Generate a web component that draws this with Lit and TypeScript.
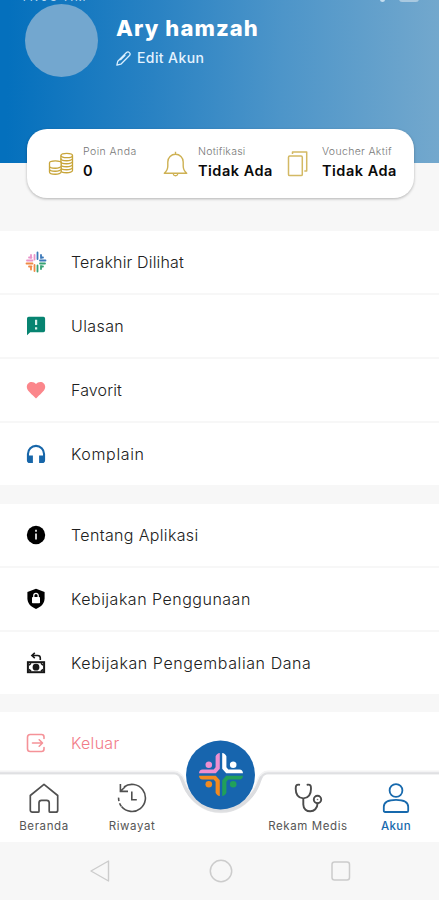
import { LitElement, html, svg, css } from "lit";
import { customElement, property } from "lit/decorators.js";
import { styleMap } from "lit/directives/style-map.js";

const coin = (x: number, y: number, n: number) => svg`
  <ellipse cx=${x} cy=${y} rx="5.8" ry="2.2"/>
  <path d=${`M${x - 5.8} ${y}v${n * 3}c0 3 11.6 3 11.6 0v${-n * 3}`}/>
  ${Array.from({ length: n - 1 }, (_, i) => svg`<path d=${`M${x - 5.8} ${y + (i + 1) * 3}c0 3 11.6 3 11.6 0`}/>`)}`;

const emblem = (colors: string[]) => svg`
  ${[[1, 1], [-1, 1], [1, -1], [-1, -1]].map(([sx, sy], i) => svg`
    <g transform=${`scale(${sx} ${sy})`} fill=${colors[i]}>
      <path d="M-1.200-21.500V-5.800L-5.200-1.200H-22c.1-2.100 1.300-3.700 3.600-3.700h11.100l1.900-2.300v-11c.8-2 2.300-3.100 4.200-3.300z"/>
      <circle cx="-12.200" cy="-9.700" r="3.300"/>
    </g>`)}`;

const icons: Record<string, unknown> = {
  edit: svg`<svg width="15" height="15" viewBox="0 0 14 14" fill="none" stroke="#d9efff" stroke-width="1.2" stroke-linejoin="round"><path d="M.8 13.2l.9-3.700 8.100-8.100c1.800-1.600 4.500.9 2.800 2.800l-8.100 8.100zM8.700 3.700L4 8.500"/></svg>`,
  coins: svg`<svg width="27" height="24" viewBox="0 0 27 24" fill="none" stroke="#c8a53a" stroke-width="1.300">${coin(18.700, 3.500, 5)}<g fill="#fff">${coin(7.300, 11, 3)}</g></svg>`,
  bell: svg`<svg width="25" height="26" viewBox="0 0 25 26" fill="none" stroke="#ceb153" stroke-width="1.400" stroke-linejoin="round"><path d="M1.300 22.300c2.700-2.400 3.500-4 3.500-7.300V11a7.700 7.700 0 0 1 15.400 0v4c0 3.300.8 4.900 3.500 7.300zM12.500 3.300V.8M10.300 23c.4 2.400 4 2.400 4.400 0"/></svg>`,
  voucher: svg`<svg width="22" height="26" viewBox="0 0 22 26" fill="none" stroke="#d3b964" stroke-width="1.500" stroke-linejoin="round"><rect x="1.500" y="5" width="13.800" height="19.600" rx="1.200"/><path d="M5.500 3V1h14.200v19h-2.400"/></svg>`,
  seen: svg`<svg width="22" height="22" viewBox="-22 -22 44 44">
    <g stroke-width="3.600" stroke-linecap="round">
      <path stroke="#e994c9" d="M-3-14v9M-10-14v6M-18-3H-7M-14-9H-9"/><path stroke="#3b78b9" d="M3-19v13M10-14v6M8-3H19M10-9H14"/>
      <path stroke="#ef8a45" d="M-19 3H-7M-14 9H-9M-10 9v6M-3 6v12"/><path stroke="#36a274" d="M3 7v12M10 8v6M8 3H18M10 9H14"/>
    </g></svg>`,
  review: svg`<svg width="20" height="20" viewBox="0 0 20 20"><path fill="#078471" d="M2.700.8h14.700a1.700 1.700 0 0 1 1.700 1.700v12a1.700 1.700 0 0 1-1.700 1.700H4.200L1 19.300V2.500A1.700 1.700 0 0 1 2.700.8z"/><path fill="#d7efe9" d="M9 3.800h2.200V9H9zM9 11.200h2.200v2.200H9z"/></svg>`,
  heart: svg`<svg width="20" height="20" viewBox="0 0 20 20"><path fill="#fb868b" d="M10 18.400L8.700 17.200C4 12.900.8 10.200.8 6.800.8 4 3 1.900 5.700 1.900c1.700 0 3.300.8 4.300 2.100 1-1.300 2.600-2.100 4.300-2.100 2.700 0 4.900 2.100 4.900 4.900 0 3.400-3.200 6.100-7.900 10.400z"/></svg>`,
  headset: svg`<svg width="20" height="20" viewBox="0 0 20 20"><path fill="#1766a9" d="M10 .8a9.100 9.100 0 0 0-9.100 9.100v6.300A2.800 2.800 0 0 0 3.700 19h3.200v-7.600H3V9.900a7 7 0 0 1 14 0v1.500h-3.900V19h3.200a2.800 2.800 0 0 0 2.800-2.800V9.900A9.100 9.100 0 0 0 10 .8z"/></svg>`,
  info: svg`<svg width="20" height="20" viewBox="0 0 20 20"><circle cx="10" cy="10" r="9.200"/><path fill="#ccc" d="M9 4.800h2v2H9zM9 8.500h2v6H9z"/></svg>`,
  shield: svg`<svg width="20" height="22" viewBox="0 0 20 22"><path d="M10 .8l8.600 3.300v6.200c0 4.800-3.300 8.700-8.600 10.700-5.300-2-8.600-5.900-8.600-10.700V4.100z"/><rect x="6" y="9" width="8" height="6.200" rx=".8" fill="#fff"/><path d="M7.800 9V7.500a2.200 2.200 0 0 1 4.400 0V9" fill="none" stroke="#fff" stroke-width="1.300"/></svg>`,
  refund: svg`<svg width="20" height="22" viewBox="0 0 20 22" fill="none" stroke="#171717" stroke-width="1.600"><rect x="1.900" y="10.200" width="16.200" height="10" stroke-width="2"/><circle cx="10" cy="15.200" r="2.600" fill="#171717"/><path d="M3 13.200l2-2M17 13.200l-2-2M3 17.400l2 2M17 17.400l-2 2"/><path d="M8.800.9L5.900 3.500l2.900 2.600M6.300 3.500h5.400c2 0 2.600 1.200 2.600 2.600v2"/></svg>`,
  logout: svg`<svg width="20" height="20" viewBox="0 0 20 20" fill="none" stroke="#f59298" stroke-width="1.600" stroke-linecap="round" stroke-linejoin="round"><path d="M18 5.500V3.900c0-1.600-.8-2.400-2.400-2.400H4.200C2.300 1.500 1.500 2.300 1.500 4.200v11.600c0 1.900.8 2.700 2.700 2.700h11.400c1.600 0 2.400-.8 2.400-2.400v-1.600M6.500 10h9.800M13.200 6.800l3.300 3.200-3.300 3.200"/></svg>`,
  home: svg`<svg width="32" height="32" viewBox="0 0 32 32" fill="none" stroke="#505050" stroke-width="1.700" stroke-linejoin="round"><path d="M2.300 12.500L16 1.400l13.700 11.100v14.700a2 2 0 0 1-2 2h-5.500a1 1 0 0 1-1-1v-8.400a2.500 2.500 0 0 0-2.500-2.500h-5.200a2.500 2.500 0 0 0-2.500 2.500v8.400a1 1 0 0 1-1 1H4.300a2 2 0 0 1-2-2z"/></svg>`,
  history: svg`<svg width="32" height="32" viewBox="0 0 32 32" fill="none" stroke="#505050" stroke-width="1.600"><path d="M8 4A13.500 13.500 0 1 1 5.500 23.500"/><path stroke-dasharray="3.500 2.200" d="M5.300 23.300A13.500 13.500 0 0 1 2.800 13"/><path d="M4.400 1v7.400h7.600M4.700 8l4.300-4M15.800 8.500v8.200h5"/></svg>`,
  steth: svg`<svg width="32" height="32" viewBox="0 0 32 32" fill="none" stroke="#4b4b4b" stroke-width="1.900" stroke-linecap="round"><path d="M7.200 1.700C4 1.300 3.700 3 3.700 5.700c0 5 1.700 9.200 7.600 9.700 6-.5 7.700-4.700 7.700-9.700 0-2.700-.2-4.400-3.500-4M11.300 15.400v6.100c0 9.200 14.200 9.200 14.200-1"/><circle cx="25.500" cy="16.500" r="3.700"/><circle cx="25.500" cy="16.500" r=".8" fill="#777" stroke="none"/></svg>`,
  user: svg`<svg width="32" height="32" viewBox="0 0 32 32" fill="none" stroke="#1769ad" stroke-width="1.800" stroke-linejoin="round"><circle cx="16" cy="7.500" r="6.400"/><path d="M3.800 27.700v-3.900c0-4.600 3.800-7 12.200-7s12.200 2.400 12.200 7v3.900c0 .8-.5 1.300-1.300 1.300H5.100c-.8 0-1.300-.5-1.300-1.300z"/></svg>`,
};

const base = css`
  :host { box-sizing: border-box; font-family: Inter, "Open Sans", sans-serif; }
  svg { display: block; }
`;

const tracked = (px: number) => styleMap({ letterSpacing: `${px}px` });

@customElement("stat-item")
class StatItem extends LitElement {
  @property() icon = "";
  @property() label = "";
  @property() value = "";
  @property({ type: Number }) tracking = 0;
  static styles = [base, css`
    :host { display: grid; grid-template-columns: 35px 1fr; align-items: center; }
    .icon { padding-top: 2px; }
    .label { font-size: 10.500px; line-height: 17px; font-weight: 300; color: #777; white-space: nowrap; }
    .value { font-size: 14.500px; line-height: 22px; font-weight: 600; color: #0a0a0a; letter-spacing: .5px; white-space: nowrap; }
  `];
  render() {
    return html`<div class="icon">${icons[this.icon]}</div>
      <div><div class="label" style=${tracked(this.tracking)}>${this.label}</div><div class="value">${this.value}</div></div>`;
  }
}

@customElement("menu-row")
class MenuRow extends LitElement {
  @property() icon = "";
  @property() label = "";
  @property({ type: Number }) tracking = 0;
  @property({ type: Boolean, reflect: true }) danger = false;
  static styles = [base, css`
    :host { flex: 1; display: grid; grid-template-columns: 46px 1fr; align-items: center; padding-left: 25px; background: #fff; }
    .icon { width: 22px; display: flex; justify-content: center; }
    .label { font-size: 16px; line-height: 22px; font-weight: 300; color: #202020; white-space: nowrap; }
    :host([danger]) .label { color: #f27b88; }
  `];
  render() {
    return html`<div class="icon">${icons[this.icon]}</div><div class="label" style=${tracked(this.tracking)}>${this.label}</div>`;
  }
}

@customElement("nav-item")
class NavItem extends LitElement {
  @property() icon = "";
  @property() label = "";
  @property({ type: Boolean, reflect: true }) active = false;
  static styles = [base, css`
    :host { display: flex; flex-direction: column; align-items: center; gap: 3px; padding-top: 10px; }
    .label { font-size: 11.500px; line-height: 16px; letter-spacing: .6px; color: #555; white-space: nowrap; }
    :host([active]) .label { color: #1769ad; font-weight: 500; letter-spacing: .4px; }
  `];
  render() {
    return html`${icons[this.icon]}<div class="label">${this.label}</div>`;
  }
}

const groups: { cls: string; rows: [string, string, number][] }[] = [
  { cls: "four", rows: [["seen", "Terakhir Dilihat", 0.17], ["review", "Ulasan", 0.4], ["heart", "Favorit", 0.12], ["headset", "Komplain", 0.65]] },
  { cls: "three", rows: [["info", "Tentang Aplikasi", 0.35], ["shield", "Kebijakan Penggunaan", 0.5], ["refund", "Kebijakan Pengembalian Dana", 0.58]] },
  { cls: "one", rows: [["logout", "Keluar", 0.3]] },
];

@customElement("app-root")
class AppRoot extends LitElement {
  static styles = [base, css`
    :host { display: flex; flex-direction: column; width: 439px; height: 900px; overflow: hidden; background: #f7f7f7; }
    .header { position: relative; height: 163px; flex: none; background: linear-gradient(91deg, #0470bd 2%, #2982c3 35%, #4d95c9 64%, #73a8cd 100%); overflow: hidden; }
    .status { position: absolute; left: 21px; right: 20px; top: -11px; display: flex; justify-content: space-between; color: #b9d9ef; font-size: 12px; line-height: 16px; letter-spacing: 2px; }
    .signals { display: flex; gap: 14px; }
    .wifi { width: 5px; height: 13px; border-radius: 0 0 3px 3px; background: #c5def0; }
    .battery { width: 20px; height: 13px; border-radius: 3px; background: #a9c9e0; }
    .profile { display: flex; gap: 18px; padding: 4px 0 0 25px; }
    .avatar { width: 73px; height: 73px; border-radius: 50%; background: #73a7cf; flex: none; }
    .name { margin-top: 9px; font-size: 22px; line-height: 30px; font-weight: 800; letter-spacing: 1.100px; color: #fff; white-space: nowrap; }
    .edit { display: flex; align-items: center; gap: 6px; margin-top: 5px; font-size: 14px; line-height: 20px; font-weight: 500; letter-spacing: .4px; color: #e4f3ff; }
    .card { position: relative; z-index: 1; flex: none; box-sizing: border-box; width: 387px; height: 69px; margin: -34px 0 0 27px; border-radius: 20px; background: #fff; box-shadow: 0 1px 3px rgba(0,0,0,.28); display: grid; grid-template-columns: 115px 124px 1fr; padding: 0 0 2px 21px; align-items: center; }
    .group { display: flex; flex-direction: column; gap: 2px; flex: none; }
    .four { height: 254.500px; margin-top: 32.500px; }
    .three { height: 190px; margin-top: 19px; }
    .one { height: 61px; margin-top: 18px; }
    .nav { position: relative; height: 69px; flex: none; background: #fff; display: grid; grid-template-columns: 88px 88px 88px 88px 88px; }
    .edge { position: absolute; left: 0; top: -36px; }
    .nav > nav-item { position: relative; }
    .system { flex: 1; background: #f7f7f7; display: flex; align-items: center; justify-content: center; gap: 98px; }
  `];
  render() {
    return html`
      <div class="header">
        <div class="status"><span>11:03 AM</span><span class="signals"><span class="wifi"></span><span class="battery"></span></span></div>
        <div class="profile">
          <div class="avatar"></div>
          <div><div class="name">Ary hamzah</div><div class="edit">${icons.edit}<span>Edit Akun</span></div></div>
        </div>
      </div>
      <div class="card">
        <stat-item icon="coins" label="Poin Anda" value="0" tracking="0.45"></stat-item>
        <stat-item icon="bell" label="Notifikasi" value="Tidak Ada" tracking="0.25"></stat-item>
        <stat-item icon="voucher" label="Voucher Aktif" value="Tidak Ada" tracking="0.33"></stat-item>
      </div>
      ${groups.map(g => html`<div class="group ${g.cls}">
        ${g.rows.map(([icon, label, tracking]) => html`<menu-row icon=${icon} label=${label} tracking=${tracking} ?danger=${icon === "logout"}></menu-row>`)}
      </div>`)}
      <div class="nav">
        <svg class="edge" width="439" height="80" viewBox="0 0 439 80">
          <path d="M0 36H174c5 0 7 3 9 8 6 18 20 30 38 30s32-12 38-30c2-5 4-8 9-8H439" fill="none" stroke="#f3f3f4" stroke-width="5"/>
          <path d="M0 36.500H174c5 0 7 3 9 8 6 18 20 30 38 30s32-12 38-30c2-5 4-8 9-8H439" fill="none" stroke="#dfe0e2" stroke-width="2.400"/>
          <path d="M180 40c7 20 21 32 41 32s34-12 41-32" fill="none" stroke="#dcdde0" stroke-width="4"/>
          <path d="M0 37.500H174c4 0 5 2 7 7 6 18 21 32 40 32s34-14 40-32c2-5 3-7 7-7H439V80H0z" fill="#fff"/>
          <circle cx="220.500" cy="38" r="34.500" fill="#1765ae"/>
          <g transform="translate(221 37.500)">${emblem(["#ee8fd0", "#fff", "#f18a20", "#21a05a"])}</g>
        </svg>
        <nav-item icon="home" label="Beranda"></nav-item>
        <nav-item icon="history" label="Riwayat"></nav-item>
        <span></span>
        <nav-item icon="steth" label="Rekam Medis"></nav-item>
        <nav-item icon="user" label="Akun" active></nav-item>
      </div>
      <div class="system">
        <svg width="22" height="24" viewBox="0 0 22 24" fill="none" stroke="#ccc" stroke-width="1.400" stroke-linejoin="round"><path d="M19.500 2v20L2 12z"/></svg>
        <svg width="24" height="24" viewBox="0 0 24 24" fill="none" stroke="#ccc" stroke-width="1.500"><circle cx="12" cy="12" r="10.700"/></svg>
        <svg width="20" height="20" viewBox="0 0 20 20" fill="none" stroke="#ccc" stroke-width="1.500"><rect x="1" y="1" width="17.500" height="18" rx="2.500"/></svg>
      </div>`;
  }
}
